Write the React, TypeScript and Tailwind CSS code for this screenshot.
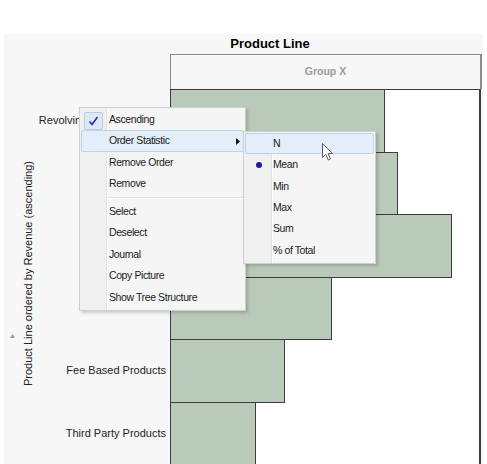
import React from 'react';

const bars = [
  { label: 'Revolving Credit Products', width: 215 },
  { label: '', width: 228 },
  { label: '', width: 282 },
  { label: '', width: 162 },
  { label: 'Fee Based Products', width: 115 },
  { label: 'Third Party Products', width: 86 },
];

const mainItems = [
  ['Ascending', 'Order Statistic', 'Remove Order', 'Remove'],
  ['Select', 'Deselect', 'Journal', 'Copy Picture', 'Show Tree Structure'],
];

const subItems = ['N', 'Mean', 'Min', 'Max', 'Sum', '% of Total'];

const menuFont = { fontFamily: '"Liberation Sans", Arial, sans-serif' };

const App: React.FC = () => {
  return (
    <div className="relative w-[487px] h-[464px] bg-white overflow-hidden" style={menuFont}>
      {/* Chart panel */}
      <div className="ml-[4px] mt-[34px] w-[479px] h-[430px] bg-[#f7f7f7] flex flex-col">
        {/* Title */}
        <div className="h-[20px] ml-[56px] w-[420px] flex items-center justify-center text-[13px] font-bold text-black leading-none pb-[1px]">
          Product Line
        </div>

        {/* Group header */}
        <div className="flex h-[35px]">
          <div className="w-[166px] shrink-0" />
          <div className="w-[312px] border border-[#8c8c8c] border-r-2 border-b-0 flex items-center justify-center text-[10.5px] font-bold text-[#9a9a9a]">
            Group X
          </div>
        </div>

        {/* Body */}
        <div className="flex flex-1 min-h-0">
          {/* axis marker */}
          <div className="w-[16px] shrink-0 flex justify-center pt-[245px]">
            <svg width="5" height="4" viewBox="0 0 5 4">
              <path d="M2.5 0 L5 4 L0 4 Z" fill="#9a9a9a" />
            </svg>
          </div>

          {/* axis title */}
          <div className="w-[18px] shrink-0 flex items-center justify-center pb-[6px]">
            <div className="-rotate-90 whitespace-nowrap text-[11px] text-[#222] leading-none">
              Product Line ordered by Revenue (ascending)
            </div>
          </div>

          {/* labels */}
          <div className="w-[132px] shrink-0 flex flex-col overflow-hidden">
            {bars.map((b, i) => (
              <div
                key={i}
                className="h-[62.6px] shrink-0 flex items-center justify-end pr-[4px] text-[11px] text-[#222] whitespace-nowrap"
              >
                {b.label}
              </div>
            ))}
          </div>

          {/* plot */}
          <div className="w-[311px] shrink-0 bg-white border-t border-r-2 border-[#3c3c3c] flex flex-col overflow-hidden">
            {bars.map((b, i) => (
              <div key={i} className="h-[63.6px] shrink-0 -mt-px">
                <div
                  className="h-full bg-[#bacaba] border border-[#3c3c3c]"
                  style={{ width: b.width }}
                />
              </div>
            ))}
          </div>
        </div>
      </div>

      {/* Context menu */}
      <div className="absolute left-[79px] top-[107px] w-[167px] h-[204px] bg-[#f5f5f5] border border-[#cfcfcf] shadow-[2px_2px_3px_rgba(0,0,0,0.18)] pt-[1px] text-[10.5px] tracking-[-0.4px] text-[#1b1b1b]">
        <div className="absolute left-0 top-0 bottom-0 w-[26px] bg-[#f0f0f0]" />
        <div className="absolute left-[26px] top-0 bottom-0 w-px bg-[#e2e2e2]" />
        <div className="absolute left-[27px] top-0 bottom-0 w-px bg-white" />
        {mainItems.map((group, gi) => (
          <React.Fragment key={gi}>
            {gi > 0 && (
              <div className="h-[6.6px] flex items-center pl-[28px] pr-[1px]">
                <div className="w-full">
                  <div className="h-px bg-[#e0e0e0]" />
                  <div className="h-px bg-white" />
                </div>
              </div>
            )}
            {group.map((item) => {
              const active = item === 'Order Statistic';
              return (
                <div
                  key={item}
                  className={`relative h-[21.4px] flex items-center mx-[1px] rounded-[2px] border ${
                    active ? 'bg-[#e3eef9] border-[#b8d5ef]' : 'border-transparent'
                  }`}
                >
                  {item === 'Ascending' && (
                    <div className="absolute left-[2px] top-[2px] w-[19px] h-[18px] rounded-[2px] bg-[#dde8f4] border border-[#b5cde6] flex items-center justify-center">
                      <svg width="11" height="10" viewBox="0 0 11 10">
                        <path d="M1.5 5.5 L4 8.5 L9.5 1" fill="none" stroke="#1f2ea0" strokeWidth="1.6" />
                      </svg>
                    </div>
                  )}
                  <span className="relative pl-[27px]">{item}</span>
                  {active && (
                    <svg className="absolute right-[3px] top-[7px]" width="4" height="7" viewBox="0 0 4 7">
                      <path d="M0 0 L4 3.5 L0 7 Z" fill="#111" />
                    </svg>
                  )}
                </div>
              );
            })}
          </React.Fragment>
        ))}
      </div>

      {/* Sub menu */}
      <div className="absolute left-[243px] top-[131px] w-[133px] h-[133px] bg-[#f5f5f5] border border-[#cfcfcf] shadow-[2px_2px_3px_rgba(0,0,0,0.18)] pt-[1px] text-[10.5px] tracking-[-0.4px] text-[#1b1b1b]">
        <div className="absolute left-0 top-0 bottom-0 w-[27px] bg-[#f0f0f0]" />
        <div className="absolute left-[27px] top-0 bottom-0 w-px bg-[#e2e2e2]" />
        <div className="absolute left-[28px] top-0 bottom-0 w-px bg-white" />
        {subItems.map((item) => {
          const active = item === 'N';
          return (
            <div
              key={item}
              className={`relative h-[21.4px] flex items-center mx-[1px] rounded-[2px] border ${
                active ? 'bg-[#e3eef9] border-[#b8d5ef]' : 'border-transparent'
              }`}
            >
              {item === 'Mean' && (
                <div className="absolute left-[10px] top-[7px] w-[6px] h-[6px] rounded-full bg-[#1c1ca6]" />
              )}
              <span className="relative pl-[27px]">{item}</span>
            </div>
          );
        })}
      </div>

      {/* Mouse cursor */}
      <svg className="absolute left-[322px] top-[143px]" width="12" height="18" viewBox="0 0 12 18">
        <path
          d="M0.5 0.5 L0.5 14.5 L3.8 11.4 L6.3 17 L8.4 16 L6 10.6 L10.5 10.6 Z"
          fill="#ffffff"
          stroke="#5a5a5a"
          strokeWidth="1"
          strokeLinejoin="round"
        />
      </svg>
    </div>
  );
};

export default App;
